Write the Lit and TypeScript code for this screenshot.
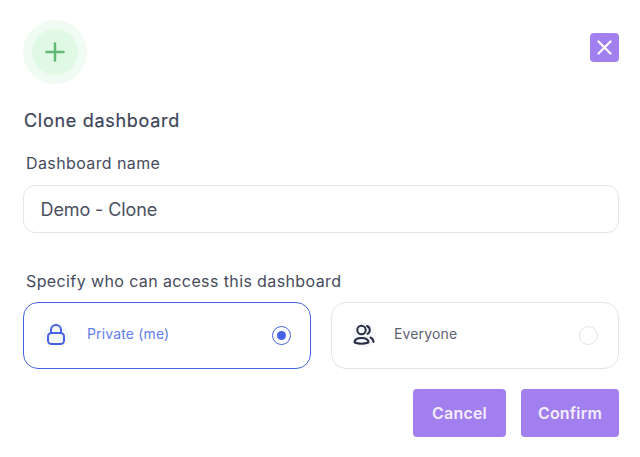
import { LitElement, html, css } from "lit";
import { customElement } from "lit/decorators.js";

@customElement("app-root")
export class AppRoot extends LitElement {
  static styles = css`
    :host { display: block; width: 640px; height: 457px; background: #fff; font-family: Inter, "Liberation Sans", sans-serif; overflow: hidden; }
    .modal { padding: 20px 21px 0 23px; display: flex; flex-direction: column; }
    .top { display: flex; justify-content: space-between; align-items: flex-start; }
    .halo { width: 64px; height: 64px; border-radius: 50%; background: #f0fcf3; display: flex; align-items: center; justify-content: center; }
    .disc { width: 46px; height: 46px; border-radius: 50%; background: #dff9e5; display: flex; align-items: center; justify-content: center; }
    .close { width: 29px; height: 29px; margin-top: 13px; border-radius: 4px; background: #a27fee; display: flex; align-items: center; justify-content: center; }
    h2 { margin: 26px 0 0 1px; font-size: 18px; line-height: 22px; font-weight: 400; letter-spacing: 0.7px; color: #3d4459; -webkit-text-stroke: 0.2px #3d4459; }
    .label { margin: 0 0 0 3px; font-size: 16px; line-height: 20px; color: #454b5d; font-weight: 400; letter-spacing: 0.39px; }
    .name { margin-top: 21px; }
    .input { margin-top: 12px; height: 48px; box-sizing: border-box; border: 1px solid #e2e4e8; border-radius: 12px; padding: 0 17px 0 16.500px; display: flex; align-items: center; font-size: 18px; letter-spacing: -0.1px; color: #4a5060; }
    .access { margin-top: 38px; }
    .cards { margin-top: 11px; display: grid; grid-template-columns: 288px 288px; gap: 20px; }
    .card { height: 67px; box-sizing: border-box; border: 1px solid #e2e4e8; border-radius: 15px; display: flex; align-items: center; padding: 0 20px; }
    .card.on { border-color: #4563e4; padding-right: 19px; }
    .ico { width: 24px; height: 24px; margin-top: -2px; border-radius: 50%; background: #f5f6f9; display: flex; align-items: center; justify-content: center; flex: none; }
    .txt { margin-left: 18px; margin-top: -3px; font-size: 14px; line-height: 18px; letter-spacing: 0.15px; color: #5c6274; flex: 1; }
    .on .txt { color: #6480ec; margin-left: 19px; }
    .radio { width: 19px; height: 19px; box-sizing: border-box; border-radius: 50%; border: 1.5px solid #e2e4e8; display: flex; align-items: center; justify-content: center; flex: none; }
    .on .radio { border: 1.8px solid #4563e4; }
    .on .radio::after { content: ""; width: 9px; height: 9px; border-radius: 50%; background: #4563e4; }
    .actions { margin-top: 20px; display: flex; justify-content: flex-end; gap: 15px; }
    .btn { height: 48px; border-radius: 4px; background: #a27fee; color: #f3eefe; font-size: 16px; font-weight: 600; letter-spacing: 0.2px; display: flex; align-items: center; justify-content: center; }
    .cancel { width: 93px; }
    .confirm { width: 98px; }
  `;

  render() {
    return html`
      <div class="modal">
        <div class="top">
          <div class="halo"><div class="disc">
            <svg width="20" height="20" viewBox="0 0 20 20" fill="none" stroke="#62b878" stroke-width="2.500" stroke-linecap="round"><path d="M10 1.500v17M1.500 10h17"/></svg>
          </div></div>
          <div class="close">
            <svg width="15" height="15" viewBox="0 0 15 15" fill="none" stroke="#fff" stroke-width="2.200" stroke-linecap="round"><path d="M1.500 1.500l12 12M13.500 1.500l-12 12"/></svg>
          </div>
        </div>
        <h2>Clone dashboard</h2>
        <p class="label name">Dashboard name</p>
        <div class="input">Demo - Clone</div>
        <p class="label access">Specify who can access this dashboard</p>
        <div class="cards">
          <div class="card on">
            <div class="ico">
              <svg width="20" height="22" viewBox="0 0 20 22" fill="none" stroke="#4563e4" stroke-width="2" stroke-linecap="round" stroke-linejoin="round"><rect x="2" y="9" width="16" height="11" rx="3.500"/><path d="M5 9V6a5 5 0 0 1 10 0v3"/></svg>
            </div>
            <div class="txt">Private (me)</div>
            <div class="radio"></div>
          </div>
          <div class="card">
            <div class="ico">
              <svg width="22" height="22" viewBox="0 0 22 22" fill="none" stroke="#262f45" stroke-width="2" stroke-linecap="round" stroke-linejoin="round"><circle cx="8.500" cy="6" r="4.200"/><path d="M1.500 18.500c0-2.800 2.800-4.500 7-4.500s7 1.700 7 4.500c-4 1.300-10 1.300-14 0z"/><path d="M14 2c2 .7 2.800 2.300 2.800 4s-.8 3.100-2.300 3.800"/><path d="M17.500 13.500c1.700.8 2.800 2.300 3 4.500"/></svg>
            </div>
            <div class="txt">Everyone</div>
            <div class="radio"></div>
          </div>
        </div>
        <div class="actions">
          <div class="btn cancel">Cancel</div>
          <div class="btn confirm">Confirm</div>
        </div>
      </div>
    `;
  }
}
